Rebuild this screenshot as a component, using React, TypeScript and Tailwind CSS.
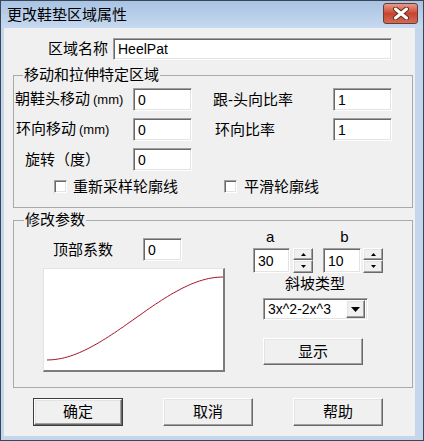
import React from "react";

const edit =
  "flex items-center bg-white border border-t-[#a0a0a0] border-l-[#a0a0a0] border-r-white border-b-white shadow-[inset_1px_1px_0_#696969,inset_-1px_-1px_0_#e3e3e3] pl-[4px] text-[14px] leading-none";
const raised =
  "flex items-center justify-center bg-[#f0f0f0] border border-t-white border-l-white border-r-[#696969] border-b-[#696969] shadow-[inset_-1px_-1px_0_#a0a0a0,inset_1px_1px_0_#e3e3e3]";

function Spin() {
  return (
    <div className="flex flex-col w-[20px] h-[25px]">
      <div className={`${raised} h-[12px]`}>
        <svg width="5" height="3" viewBox="0 0 5 3">
          <path d="M2.5 0 L5 3 L0 3 Z" fill="#000" />
        </svg>
      </div>
      <div className={`${raised} h-[13px]`}>
        <svg width="5" height="3" viewBox="0 0 5 3">
          <path d="M0 0 L5 0 L2.5 3 Z" fill="#000" />
        </svg>
      </div>
    </div>
  );
}

function Check() {
  return (
    <div className="w-[13px] h-[13px] bg-white border border-t-[#a0a0a0] border-l-[#a0a0a0] border-r-white border-b-white shadow-[inset_1px_1px_0_#696969,inset_-1px_-1px_0_#e3e3e3]" />
  );
}

export default function App() {
  const pts: string[] = [];
  for (let i = 0; i <= 60; i++) {
    const t = i / 60;
    const s = 3 * t * t - 2 * t * t * t;
    pts.push(`${(3 + 176 * t).toFixed(1)},${(91 - 83 * s).toFixed(1)}`);
  }

  return (
    <div className="w-[424px] h-[441px] bg-[#c3d6ec] border border-[#3a4656] flex flex-col font-['Liberation_Sans','Noto_Sans_CJK_SC',sans-serif] text-black text-[15px]">
      {/* Title bar */}
      <div className="h-[27px] flex items-start justify-between bg-linear-to-b from-[#a9c3e3] to-[#c6d9ef]">
        <div className="pl-[6px] pt-[6px] text-[15px] leading-[16px]">更改鞋垫区域属性</div>
        <div className="mt-[2px] mr-[5px] w-[35px] h-[21px] rounded-[3px] border border-[#6b3a33] bg-linear-to-b from-[#e39c89] via-[#c8442f] to-[#d06b56] flex items-center justify-center">
          <svg width="16" height="13" viewBox="0 0 16 13">
            <path d="M2.5 2 L13.5 11 M13.5 2 L2.5 11" stroke="#6a2a20" strokeWidth="5" strokeLinecap="round" />
            <path d="M2.5 2 L13.5 11 M13.5 2 L2.5 11" stroke="#ffffff" strokeWidth="3" strokeLinecap="round" />
          </svg>
        </div>
      </div>

      <div className="flex">
        <div className="ml-[3px] w-[411px] h-[408px] bg-[#f0f0f0] flex flex-col">
          {/* Name row */}
          <div className="mt-[10px] flex items-center h-[22px]">
            <div className="w-[104px] text-right leading-[16px]">区域名称</div>
            <div className={`${edit} ml-[5px] w-[279px] h-[22px]`}>HeelPat</div>
          </div>

          {/* Group 1 */}
          <fieldset className="mt-[7px] ml-[9px] w-[400px] border border-[#a9a9a9] px-0 pb-[14px]">
            <legend className="ml-[9px] px-[1px] leading-[16px]">移动和拉伸特定区域</legend>
            <div className="mt-[5px] flex items-center h-[23px]">
              <div className="w-[119px] pl-[1px] leading-[16px] whitespace-nowrap">
                朝鞋头移动<span className="ml-[3px] text-[13px]">(mm)</span>
              </div>
              <div className={`${edit} w-[59px] h-[23px]`}>0</div>
              <div className="w-[21px]" />
              <div className="w-[120px] leading-[16px]">跟-头向比率</div>
              <div className={`${edit} w-[59px] h-[23px]`}>1</div>
            </div>
            <div className="mt-[7px] flex items-center h-[23px]">
              <div className="w-[119px] pl-[2px] leading-[16px] whitespace-nowrap">
                环向移动<span className="ml-[3px] text-[13px]">(mm)</span>
              </div>
              <div className={`${edit} w-[59px] h-[23px]`}>0</div>
              <div className="w-[21px]" />
              <div className="w-[120px] pl-[2px] leading-[16px]">环向比率</div>
              <div className={`${edit} w-[59px] h-[23px]`}>1</div>
            </div>
            <div className="mt-[7px] flex items-center h-[23px]">
              <div className="w-[119px] pl-[11px] leading-[16px]">旋转（度）</div>
              <div className={`${edit} w-[59px] h-[23px]`}>0</div>
            </div>
            <div className="mt-[9px] flex items-center h-[13px] pl-[40px]">
              <div className="w-[170px] flex items-center">
                <Check />
                <span className="ml-[6px] leading-[16px]">重新采样轮廓线</span>
              </div>
              <Check />
              <span className="ml-[7px] leading-[16px]">平滑轮廓线</span>
            </div>
          </fieldset>

          {/* Group 2 */}
          <fieldset className="mt-[4px] ml-[9px] w-[400px] border border-[#a9a9a9] px-0 pb-[15px]">
            <legend className="ml-[10px] px-[1px] leading-[16px]">修改参数</legend>
            <div className="flex items-start">
              <div className="w-[239px] flex flex-col">
                <div className="mt-[10px] flex items-center h-[23px] pl-[39px]">
                  <div className="w-[90px] leading-[16px]">顶部系数</div>
                  <div className={`${edit} w-[39px] h-[23px]`}>0</div>
                </div>
                <div className="mt-[7px] ml-[29px] w-[182px] h-[104px] bg-white border-t border-l border-[#e3e3e3] border-r-2 border-b-2 border-r-[#7c7c7c] border-b-[#7c7c7c]">
                  <svg width="180" height="102" viewBox="0 0 180 102">
                    <polyline points={pts.join(" ")} fill="none" stroke="#a8102a" strokeWidth="1" />
                  </svg>
                </div>
              </div>
              <div className="flex flex-col">
                <div className="mt-[1px] flex h-[16px] leading-[16px] text-[15px]">
                  <span className="ml-[13px]">a</span>
                  <span className="ml-[66px]">b</span>
                </div>
                <div className="mt-[3px] flex items-start">
                  <div className={`${edit} w-[37px] h-[25px]`}>30</div>
                  <div className="ml-[3px]">
                    <Spin />
                  </div>
                  <div className={`${edit} ml-[10px] w-[38px] h-[25px]`}>10</div>
                  <div className="ml-[2px]">
                    <Spin />
                  </div>
                </div>
                <div className="mt-[3px] pl-[32px] leading-[16px]">斜坡类型</div>
                <div className={`${edit} mt-[6px] ml-[10px] w-[105px] h-[22px] justify-between pr-[2px]`}>
                  <span>3x^2-2x^3</span>
                  <div className={`${raised} w-[19px] h-[18px]`}>
                    <svg width="9" height="5" viewBox="0 0 9 5">
                      <path d="M0 0 L9 0 L4.5 5 Z" fill="#000" />
                    </svg>
                  </div>
                </div>
                <div className={`${raised} mt-[18px] ml-[10px] w-[100px] h-[27px] leading-[16px]`}>显示</div>
              </div>
            </div>
          </fieldset>

          {/* Bottom buttons */}
          <div className="mt-[10px] pl-[29px] flex gap-[40px]">
            <div className="w-[90px] h-[28px] border border-[#3c3c3c] flex">
              <div className={`${raised} flex-1 leading-[16px]`}>确定</div>
            </div>
            <div className={`${raised} w-[90px] h-[28px] leading-[16px]`}>取消</div>
            <div className={`${raised} w-[90px] h-[28px] leading-[16px]`}>帮助</div>
          </div>
        </div>
      </div>
    </div>
  );
}
